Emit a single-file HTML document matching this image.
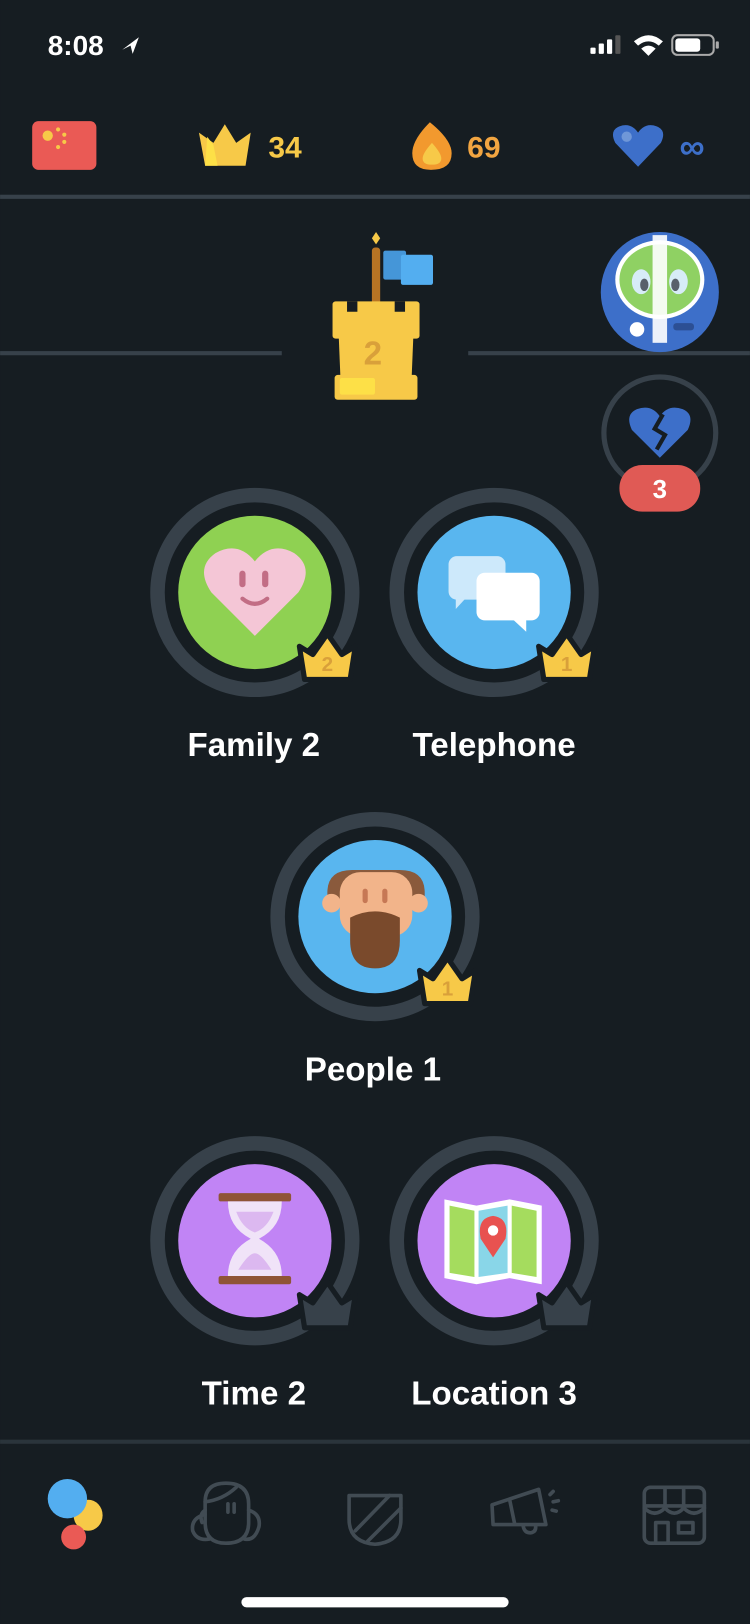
<!DOCTYPE html>
<html><head><meta charset="utf-8"><style>
html,body{margin:0;padding:0;background:#161d22;width:750px;height:1624px;overflow:hidden}
svg{display:block}
text{font-family:"Liberation Sans",sans-serif;font-weight:bold}
</style></head><body>
<svg width="750" height="1624" viewBox="0 0 724 1568" xmlns="http://www.w3.org/2000/svg">
<rect width="724" height="1568" fill="#161d22"/>
<!-- status bar -->
<text x="46" y="53" fill="#fff" font-size="27" font-weight="600">8:08</text>
<path d="M118 48 L134 36 L128 52 L126 44 Z" fill="#fff"/>
<rect x="570" y="46" width="5" height="6" rx="1" fill="#fff"/>
<rect x="578" y="42" width="5" height="10" rx="1" fill="#fff"/>
<rect x="586" y="38" width="5" height="14" rx="1" fill="#fff"/>
<rect x="594" y="34" width="5" height="18" rx="1" fill="#555"/>
<path d="M612 40 Q626 28 640 40 L636 44 Q626 36 616 44 Z M619 47 Q626 41 633 47 L626 54 Z" fill="#fff"/>
<rect x="649" y="34" width="40" height="19" rx="5" fill="none" stroke="#aaa" stroke-width="2"/>
<rect x="652" y="37" width="24" height="13" rx="3" fill="#fff"/>
<rect x="691" y="40" width="3" height="7" rx="1" fill="#aaa"/>
<!-- top bar -->
<rect x="31" y="117" width="62" height="47" rx="6" fill="#ea5a55"/>
<g fill="#f7c948"><circle cx="46" cy="131" r="5"/><circle cx="56" cy="125" r="2"/><circle cx="62" cy="130" r="2"/><circle cx="62" cy="137" r="2"/><circle cx="56" cy="142" r="2"/></g>
<path d="M192 128 L206 138 L217 120 L228 138 L242 128 L237 160 L198 160 Z" fill="#f7c948"/>
<path d="M200 132 L206 140 L210 160 L198 160 Z" fill="#fde047"/>
<text x="259" y="152" fill="#f7c948" font-size="29">34</text>
<path d="M415 118 Q436 135 436 148 Q436 164 416 164 Q398 164 398 148 Q398 135 415 118 Z" fill="#f2992e"/>
<path d="M417 138 Q426 148 426 153 Q426 159 417 159 Q408 159 408 153 Q408 148 417 138 Z" fill="#f7c948"/>
<text x="451" y="152" fill="#f2a541" font-size="29">69</text>
<path d="M616 161 L594 138 Q588 126 598 122 Q609 118 616 128 Q623 118 634 122 Q644 126 638 138 Z" fill="#3d6fc9"/>
<circle cx="605" cy="132" r="5" fill="#6f97d8"/>
<text x="656" y="153" fill="#3d6fc9" font-size="34">∞</text>
<rect x="0" y="188" width="724" height="4" fill="#37414a"/>
<!-- castle row -->
<rect x="0" y="339" width="272" height="4" fill="#37414a"/>
<rect x="452" y="339" width="272" height="4" fill="#37414a"/>
<path d="M363 224 L367 230 L363 236 L359 230 Z" fill="#f7c948"/>
<rect x="359" y="239" width="8" height="56" rx="3" fill="#b87424"/>
<rect x="370" y="242" width="22" height="28" rx="2" fill="#4596d8"/>
<rect x="387" y="246" width="31" height="29" rx="2" fill="#53aef0"/>
<g fill="#f7c948">
<rect x="321" y="291" width="84" height="36" rx="3"/>
<path d="M327 325 L399 325 L397 374 L329 374 Z"/>
<rect x="323" y="362" width="80" height="24" rx="3"/>
</g>
<g fill="#161d22">
<rect x="335" y="291" width="10" height="10"/>
<rect x="381" y="291" width="10" height="10"/>
</g>
<rect x="328" y="365" width="34" height="16" rx="2" fill="#fde047"/>
<text x="351" y="352" fill="#d9a03a" font-size="32">2</text>
<!-- avatar -->
<ellipse cx="637" cy="282" rx="57" ry="58" fill="#3d6fc9"/>
<ellipse cx="637" cy="270" rx="43" ry="38" fill="#fff"/>
<ellipse cx="637" cy="270" rx="39" ry="34" fill="#8fd163"/>
<ellipse cx="619" cy="272" rx="9" ry="12" fill="#d7ecf7"/><ellipse cx="655" cy="272" rx="9" ry="12" fill="#d7ecf7"/>
<ellipse cx="622" cy="275" rx="4" ry="6" fill="#59606b"/><ellipse cx="652" cy="275" rx="4" ry="6" fill="#59606b"/>
<rect x="630" y="227" width="14" height="104" fill="#fff" opacity=".9"/>
<circle cx="615" cy="318" r="7" fill="#fff"/>
<rect x="650" y="312" width="20" height="7" rx="3" fill="#2c4f94"/>
<!-- broken heart -->
<circle cx="637" cy="418" r="54" fill="none" stroke="#37414a" stroke-width="5"/>
<path d="M637 442 L610 415 Q603 400 615 395 Q629 390 637 402 Q645 390 659 395 Q671 400 664 415 Z" fill="#3d6fc9"/>
<path d="M640 400 L632 414 L642 420 L634 434" stroke="#161d22" stroke-width="4" fill="none"/>
<rect x="598" y="449" width="78" height="45" rx="22" fill="#e05a55"/>
<text x="637" y="481" fill="#fff" font-size="25" text-anchor="middle">3</text>

<!-- nodes -->
<g>
<circle cx="246" cy="572" r="94" fill="none" stroke="#37414a" stroke-width="14"/>
<circle cx="246" cy="572" r="74" fill="#8fd152"/>
<path d="M246 614 L204 572 Q188 548 208 534 Q230 522 246 542 Q262 522 284 534 Q304 548 288 572 Z" fill="#f4c6d6"/>
<rect x="231" y="551" width="6" height="16" rx="3" fill="#c26d85"/><rect x="253" y="551" width="6" height="16" rx="3" fill="#c26d85"/>
<path d="M234 578 Q246 588 258 578" stroke="#c26d85" stroke-width="4" fill="none" stroke-linecap="round"/>
</g>
<g>
<circle cx="477" cy="572" r="94" fill="none" stroke="#37414a" stroke-width="14"/>
<circle cx="477" cy="572" r="74" fill="#59b6ef"/>
<rect x="433" y="537" width="55" height="42" rx="8" fill="#cde9fb"/>
<path d="M440 575 L440 588 L452 575 Z" fill="#cde9fb"/>
<rect x="460" y="553" width="61" height="46" rx="8" fill="#fff"/>
<path d="M494 597 L508 610 L508 597 Z" fill="#fff"/>
</g>
<g>
<circle cx="362" cy="885" r="94" fill="none" stroke="#37414a" stroke-width="14"/>
<circle cx="362" cy="885" r="74" fill="#59b6ef"/>
<path d="M316 862 Q316 840 340 840 L386 840 Q410 840 410 862 L410 870 L316 870 Z" fill="#8a5a3c"/>
<circle cx="320" cy="872" r="9" fill="#f2b48a"/><circle cx="404" cy="872" r="9" fill="#f2b48a"/>
<rect x="328" y="842" width="70" height="62" rx="20" fill="#f2b48a"/>
<path d="M338 886 Q362 874 386 886 L386 908 Q386 935 362 935 Q338 935 338 908 Z" fill="#7a4a2c"/>
<rect x="350" y="858" width="5" height="14" rx="2.5" fill="#c67855"/><rect x="369" y="858" width="5" height="14" rx="2.5" fill="#c67855"/>
</g>
<g>
<circle cx="246" cy="1198" r="94" fill="none" stroke="#37414a" stroke-width="14"/>
<circle cx="246" cy="1198" r="74" fill="#c184f5"/>
<rect x="211" y="1152" width="70" height="8" rx="2" fill="#8f5436"/>
<rect x="211" y="1232" width="70" height="8" rx="2" fill="#8f5436"/>
<path d="M220 1160 L272 1160 Q272 1185 250 1196 Q272 1208 272 1232 L220 1232 Q220 1208 242 1196 Q220 1185 220 1160 Z" fill="#f0e3f8"/>
<path d="M228 1170 L264 1170 Q258 1186 246 1190 Q234 1186 228 1170 Z M230 1226 Q240 1210 246 1210 Q252 1210 262 1226 Z" fill="#dcb8f0"/>
</g>
<g>
<circle cx="477" cy="1198" r="94" fill="none" stroke="#37414a" stroke-width="14"/>
<circle cx="477" cy="1198" r="74" fill="#c184f5"/>
<path d="M429 1158 L460 1164 L492 1158 L523 1164 L523 1240 L492 1234 L460 1240 L429 1234 Z" fill="#fff"/>
<path d="M434 1164 L458 1169 L458 1233 L434 1229 Z" fill="#a5dc5e"/>
<path d="M462 1169 L490 1164 L490 1229 L462 1233 Z" fill="#89d6e8"/>
<path d="M494 1164 L518 1169 L518 1233 L494 1229 Z" fill="#a5dc5e"/>
<path d="M476 1214 L464 1196 Q460 1176 476 1174 Q492 1176 488 1196 Z" fill="#e85250"/>
<circle cx="476" cy="1188" r="5" fill="#fff"/>
</g>
<!-- crowns -->
<path d="M289 624 L302 632 L316 612 L330 632 L343 624 L338 656 L294 656 Z" fill="#f7c948" stroke="#161d22" stroke-width="5" stroke-linejoin="round"/>
<text x="316" y="648" fill="#d9a03a" font-size="20" text-anchor="middle">2</text>
<path d="M520 624 L533 632 L547 612 L561 632 L574 624 L569 656 L525 656 Z" fill="#f7c948" stroke="#161d22" stroke-width="5" stroke-linejoin="round"/>
<text x="547" y="648" fill="#d9a03a" font-size="20" text-anchor="middle">1</text>
<path d="M405 937 L418 945 L432 925 L446 945 L459 937 L454 969 L410 969 Z" fill="#f7c948" stroke="#161d22" stroke-width="5" stroke-linejoin="round"/>
<text x="432" y="961" fill="#d9a03a" font-size="20" text-anchor="middle">1</text>
<path d="M289 1250 L302 1258 L316 1238 L330 1258 L343 1250 L338 1282 L294 1282 Z" fill="#37414a" stroke="#161d22" stroke-width="5" stroke-linejoin="round"/>
<path d="M520 1250 L533 1258 L547 1238 L561 1258 L574 1250 L569 1282 L525 1282 Z" fill="#37414a" stroke="#161d22" stroke-width="5" stroke-linejoin="round"/>
<!-- labels -->
<g fill="#fff" font-size="32" text-anchor="middle">
<text x="245" y="730">Family 2</text>
<text x="477" y="730">Telephone</text>
<text x="360" y="1043">People 1</text>
<text x="245" y="1356">Time 2</text>
<text x="477" y="1356">Location 3</text>
</g>
<!-- bottom nav -->
<rect x="0" y="1390" width="724" height="4" fill="#2a343b"/>
<ellipse cx="85" cy="1463" rx="14" ry="15" fill="#f7c948"/>
<ellipse cx="65" cy="1447" rx="19" ry="19" fill="#53aef0"/>
<ellipse cx="71" cy="1484" rx="12" ry="12" fill="#ea5a55"/>
<g fill="none" stroke="#414b53" stroke-width="3.5" stroke-linecap="round" stroke-linejoin="round">
<path d="M198 1450 Q198 1432 218 1432 Q240 1432 240 1452 L240 1470 Q240 1490 218 1490 Q198 1490 198 1470 Z"/>
<path d="M198 1450 Q215 1448 228 1436 M198 1458 Q192 1462 195 1470 M240 1458 Q252 1462 250 1474 Q246 1488 236 1486 M198 1462 Q184 1466 186 1478 Q190 1488 202 1486"/>
<path d="M220 1452 v8 M226 1452 v8"/>
<path d="M337 1444 L387 1444 L387 1467 Q387 1489 362 1491 Q337 1489 337 1467 Z"/>
<path d="M343 1478 L376 1444 M355 1488 L387 1456"/>
<path d="M475 1453 L520 1438 L527 1472 L476 1472 Z M492 1448 L497 1472 M505 1473 Q506 1480 512 1480 Q518 1479 517 1473"/>
<path d="M531 1443 l3 -3 M534 1450 l5 -1 M533 1458 l4 1"/>
<rect x="622" y="1436" width="58" height="54" rx="6"/>
<path d="M622 1456 Q632 1466 642 1456 Q651 1466 660 1456 Q670 1466 680 1456 M622 1454 h58 M642 1436 v20 M660 1436 v20"/>
<path d="M633 1490 v-20 h12 v20 M655 1470 h14 v10 h-14 z"/>
</g>
<rect x="233" y="1542" width="258" height="10" rx="5" fill="#fff"/>
</svg>
</body></html>
